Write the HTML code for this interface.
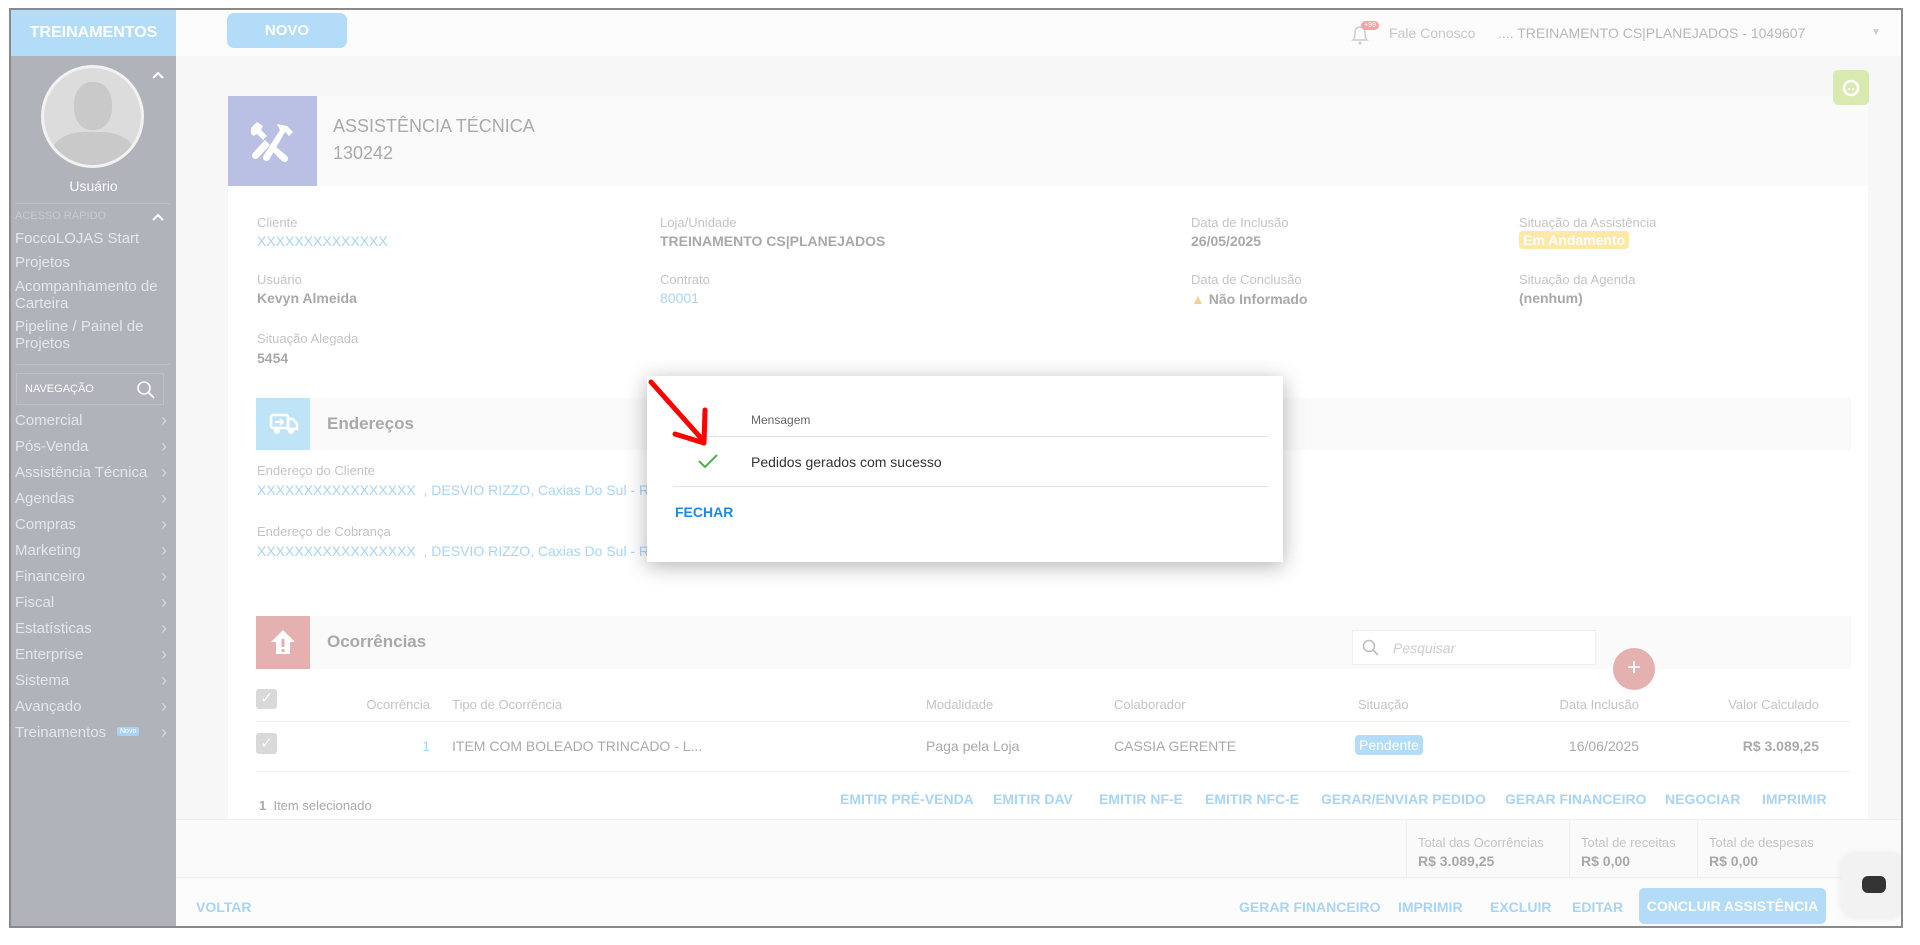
<!DOCTYPE html>
<html><head><meta charset="utf-8"><style>
*{margin:0;padding:0;box-sizing:border-box}
body{width:1920px;height:945px;background:#fff;font-family:"Liberation Sans",sans-serif;position:relative;overflow:hidden;color:#aaa}
.a{position:absolute;white-space:nowrap}
.frame{position:absolute;left:9px;top:8px;width:1894px;height:920px;border:2px solid #8a8a8a;background:#f7f7f7;overflow:hidden}
.lbl{font-size:13px;color:#c4c4c4}
.val{font-size:14px;color:#a9a9a9;font-weight:bold}
.lnk{font-size:14px;color:#a9d4f5}
.menu{font-size:15px;color:#e4e6ea}
.chev{position:absolute;left:150px;font-size:18px;color:#d6d8dc;line-height:16px}
.act{font-size:14px;font-weight:bold;color:#a9d4f5}
</style></head><body>
<div class="frame">
<!-- sidebar -->
<div class="a" style="left:0;top:0;width:165px;height:920px;background:#b0b3ba"></div>
<div class="a" style="left:0;top:0;width:165px;height:46px;background:#b3dcf9;color:#fff;font-weight:bold;font-size:16px;text-align:center;line-height:46px">TREINAMENTOS</div>
<div class="a" style="left:30px;top:55px;width:103px;height:103px;border-radius:50%;background:#dcdcdc;border:3px solid #f2f2f2;overflow:hidden">
 <div style="position:absolute;left:30px;top:14px;width:38px;height:48px;border-radius:45%;background:#c9c9c9"></div>
 <div style="position:absolute;left:8px;top:64px;width:82px;height:50px;border-radius:40% 40% 0 0;background:#c9c9c9"></div>
</div>
<svg class="a" style="left:140px;top:60px" width="14" height="10"><path d="M2 8 L7 3 L12 8" fill="none" stroke="#fff" stroke-width="2"/></svg>
<div class="a" style="left:0;width:165px;top:168px;text-align:center;color:#fff;font-size:14px">Usuário</div>
<div class="a" style="left:4px;top:193px;width:155px;height:1px;background:#bdc0c6"></div>
<div class="a" style="left:4px;top:200px;font-size:11px;color:#c8cbd0">ACESSO RÁPIDO</div>
<svg class="a" style="left:140px;top:202px" width="14" height="10"><path d="M2 8 L7 3 L12 8" fill="none" stroke="#fff" stroke-width="2"/></svg>
<div class="a menu" style="left:4px;top:220px">FoccoLOJAS Start</div>
<div class="a menu" style="left:4px;top:244px">Projetos</div>
<div class="a menu" style="left:4px;top:268px;line-height:17px">Acompanhamento de<br>Carteira</div>
<div class="a menu" style="left:4px;top:308px;line-height:17px">Pipeline / Painel de<br>Projetos</div>
<div class="a" style="left:4px;top:354px;width:155px;height:1px;background:#bdc0c6"></div>
<div class="a" style="left:5px;top:363px;width:148px;height:32px;border:1px solid #bdc0c6"></div>
<div class="a" style="left:14px;top:373px;font-size:11px;color:#fff">NAVEGAÇÃO</div>
<svg class="a" style="left:124px;top:369px" width="22" height="22"><circle cx="9" cy="9" r="6" fill="none" stroke="#fff" stroke-width="1.6"/><line x1="13" y1="13" x2="19" y2="19" stroke="#fff" stroke-width="1.8"/></svg>
<div class="a" style="left:0;top:402px;width:165px">
<div class="a menu" style="left:4px;top:0">Comercial</div><div class="chev" style="top:0">›</div>
<div class="a menu" style="left:4px;top:26px">Pós-Venda</div><div class="chev" style="top:26px">›</div>
<div class="a menu" style="left:4px;top:52px">Assistência Técnica</div><div class="chev" style="top:52px">›</div>
<div class="a menu" style="left:4px;top:78px">Agendas</div><div class="chev" style="top:78px">›</div>
<div class="a menu" style="left:4px;top:104px">Compras</div><div class="chev" style="top:104px">›</div>
<div class="a menu" style="left:4px;top:130px">Marketing</div><div class="chev" style="top:130px">›</div>
<div class="a menu" style="left:4px;top:156px">Financeiro</div><div class="chev" style="top:156px">›</div>
<div class="a menu" style="left:4px;top:182px">Fiscal</div><div class="chev" style="top:182px">›</div>
<div class="a menu" style="left:4px;top:208px">Estatísticas</div><div class="chev" style="top:208px">›</div>
<div class="a menu" style="left:4px;top:234px">Enterprise</div><div class="chev" style="top:234px">›</div>
<div class="a menu" style="left:4px;top:260px">Sistema</div><div class="chev" style="top:260px">›</div>
<div class="a menu" style="left:4px;top:286px">Avançado</div><div class="chev" style="top:286px">›</div>
<div class="a menu" style="left:4px;top:312px">Treinamentos</div><div class="a" style="left:106px;top:315px;background:#a9d4f5;color:#fff;font-size:7px;padding:1px 3px;border-radius:2px">Novo</div><div class="chev" style="top:312px">›</div>
</div>
<!-- top bar -->
<div class="a" style="left:165px;top:0;width:1729px;height:46px;background:#fcfcfc"></div>
<div class="a" style="left:216px;top:3px;width:120px;height:35px;background:#b3dcf9;border-radius:7px;color:#fff;font-weight:bold;font-size:15px;text-align:center;line-height:35px">NOVO</div>
<svg class="a" style="left:1338px;top:13px" width="22" height="24"><path d="M4 17 Q6 15 6 10 Q6 4 11 4 Q16 4 16 10 Q16 15 18 17 Z" fill="none" stroke="#ccc" stroke-width="1.5"/><circle cx="11" cy="20" r="1.5" fill="#ccc"/></svg>
<div class="a" style="left:1350px;top:11px;background:#f5a3a3;color:#fff;font-size:7px;padding:1px 3px;border-radius:6px">+99</div>
<div class="a" style="left:1378px;top:15px;font-size:14px;color:#c8c8c8">Fale Conosco</div>
<div class="a" style="left:1487px;top:15px;font-size:14px;color:#b8b8b8">.... TREINAMENTO CS|PLANEJADOS - 1049607</div>
<div class="a" style="left:1860px;top:17px;font-size:10px;color:#ccc">▼</div>
<!-- main panel -->
<div class="a" style="left:217px;top:86px;width:1640px;height:731px;background:#fff"></div>
<div class="a" style="left:217px;top:86px;width:1640px;height:90px;background:#fafafa"></div>
<!-- green -->
<div class="a" style="left:1822px;top:60px;width:36px;height:35px;background:#d8eab0;border-radius:5px"></div>
<svg class="a" style="left:1830px;top:68px" width="20" height="20"><circle cx="10" cy="10" r="7" fill="none" stroke="#fff" stroke-width="2.5"/><circle cx="8" cy="11" r="1" fill="#fff"/><circle cx="12" cy="11" r="1" fill="#fff"/></svg>
<div class="a" style="left:217px;top:86px;width:89px;height:90px;background:#bac0e4"></div>
<svg class="a" style="left:240px;top:108px" width="44" height="46" viewBox="0 0 44 46"><g fill="#fff"><path d="M6 4 l6 4 -2 4 6 6 -4 4 -6 -6 -4 2 -4 -6z"/><path d="M14 22 l5 5 -12 13 q-3 2 -5 0 q-2 -2 0 -5z"/><path d="M26 6 l10 2 6 6 -4 4 -4 -4 -16 28 q-3 2 -5 0 q-2 -2 0 -5 l16 -25z"/><path d="M24 28 l12 10 q2 3 0 5 q-2 2 -5 0 l-11 -11z"/></g></svg>
<div class="a" style="left:322px;top:106px;font-size:18px;color:#aaa">ASSISTÊNCIA TÉCNICA</div>
<div class="a" style="left:322px;top:133px;font-size:18px;color:#aaa">130242</div>
<!-- info fields -->
<div class="a lbl" style="left:246px;top:205px">Cliente</div>
<div class="a lnk" style="left:246px;top:223px">XXXXXXXXXXXXXX</div>
<div class="a lbl" style="left:246px;top:262px">Usuário</div>
<div class="a val" style="left:246px;top:280px">Kevyn Almeida</div>
<div class="a lbl" style="left:246px;top:321px">Situação Alegada</div>
<div class="a val" style="left:246px;top:340px">5454</div>
<div class="a lbl" style="left:649px;top:205px">Loja/Unidade</div>
<div class="a val" style="left:649px;top:223px">TREINAMENTO CS|PLANEJADOS</div>
<div class="a lbl" style="left:649px;top:262px">Contrato</div>
<div class="a lnk" style="left:649px;top:280px">80001</div>
<div class="a lbl" style="left:1180px;top:205px">Data de Inclusão</div>
<div class="a val" style="left:1180px;top:223px">26/05/2025</div>
<div class="a lbl" style="left:1180px;top:262px">Data de Conclusão</div>
<div class="a val" style="left:1180px;top:281px"><span style="color:#f6cf9a">▲</span> Não Informado</div>
<div class="a lbl" style="left:1508px;top:205px">Situação da Assistência</div>
<div class="a" style="left:1508px;top:221px;background:#fde8a8;color:#fff;font-weight:bold;font-size:14px;padding:1px 4px;border-radius:4px">Em Andamento</div>
<div class="a lbl" style="left:1508px;top:262px">Situação da Agenda</div>
<div class="a val" style="left:1508px;top:280px">(nenhum)</div>
<!-- Endereços -->
<div class="a" style="left:245px;top:388px;width:1595px;height:52px;background:#fafafa"></div>
<div class="a" style="left:245px;top:388px;width:54px;height:52px;background:#c0e4f7"></div>
<svg class="a" style="left:258px;top:402px" width="30" height="24"><rect x="2" y="3" width="17" height="13" rx="2" fill="none" stroke="#fff" stroke-width="2.5"/><path d="M19 7 h5 l4 5 v5 h-9z" fill="none" stroke="#fff" stroke-width="2.5"/><circle cx="8" cy="19" r="3" fill="#fff"/><circle cx="22" cy="19" r="3" fill="#fff"/><path d="M6 10 h8 M11 7 l3 3 -3 3" stroke="#fff" stroke-width="2" fill="none"/></svg>
<div class="a" style="left:316px;top:404px;font-size:17px;color:#a9a9a9;font-weight:bold">Endereços</div>
<div class="a lbl" style="left:246px;top:453px">Endereço do Cliente</div>
<div class="a lnk" style="left:246px;top:472px">XXXXXXXXXXXXXXXXX &nbsp;, DESVIO RIZZO, Caxias Do Sul - RS, 95</div>
<div class="a lbl" style="left:246px;top:514px">Endereço de Cobrança</div>
<div class="a lnk" style="left:246px;top:533px">XXXXXXXXXXXXXXXXX &nbsp;, DESVIO RIZZO, Caxias Do Sul - RS, 95</div>
<!-- Ocorrências -->
<div class="a" style="left:245px;top:606px;width:1595px;height:53px;background:#fafafa"></div>
<div class="a" style="left:245px;top:606px;width:54px;height:53px;background:#e4b0b0"></div>
<svg class="a" style="left:258px;top:618px" width="28" height="28"><path d="M14 2 L26 14 H21 V26 H7 V14 H2 Z" fill="#fff"/><rect x="12.5" y="11" width="3" height="8" fill="#e4b0b0"/><rect x="12.5" y="21" width="3" height="3" fill="#e4b0b0"/></svg>
<div class="a" style="left:316px;top:622px;font-size:17px;color:#a9a9a9;font-weight:bold">Ocorrências</div>
<div class="a" style="left:1341px;top:620px;width:244px;height:35px;background:#fff;border:1px solid #eee"></div>
<svg class="a" style="left:1350px;top:628px" width="20" height="20"><circle cx="8" cy="8" r="5.5" fill="none" stroke="#bbb" stroke-width="1.5"/><line x1="12" y1="12" x2="17" y2="17" stroke="#bbb" stroke-width="1.6"/></svg>
<div class="a" style="left:1382px;top:630px;font-size:14px;font-style:italic;color:#ccc">Pesquisar</div>
<div class="a" style="left:1602px;top:638px;width:42px;height:42px;border-radius:50%;background:#e4b0b0;color:#fff;font-size:24px;text-align:center;line-height:40px">+</div>
<!-- table -->
<div class="a" style="left:245px;top:679px;width:21px;height:20px;background:#d9d9d9;border-radius:3px;color:#fff;font-size:15px;text-align:center;line-height:20px">✓</div>
<div class="a lbl" style="left:345px;top:687px;width:74px;text-align:right">Ocorrência</div>
<div class="a lbl" style="left:441px;top:687px">Tipo de Ocorrência</div>
<div class="a lbl" style="left:915px;top:687px">Modalidade</div>
<div class="a lbl" style="left:1103px;top:687px">Colaborador</div>
<div class="a lbl" style="left:1347px;top:687px">Situação</div>
<div class="a lbl" style="left:1528px;top:687px;width:100px;text-align:right">Data Inclusão</div>
<div class="a lbl" style="left:1708px;top:687px;width:100px;text-align:right">Valor Calculado</div>
<div class="a" style="left:245px;top:711px;width:1595px;height:1px;background:#f0f0f0"></div>
<div class="a" style="left:245px;top:723px;width:21px;height:21px;background:#d9d9d9;border-radius:3px;color:#fff;font-size:15px;text-align:center;line-height:21px">✓</div>
<div class="a lnk" style="left:380px;top:728px;width:39px;text-align:right">1</div>
<div class="a" style="left:441px;top:728px;font-size:14px;color:#aaa">ITEM COM BOLEADO TRINCADO - L...</div>
<div class="a" style="left:915px;top:728px;font-size:14px;color:#aaa">Paga pela Loja</div>
<div class="a" style="left:1103px;top:728px;font-size:14px;color:#aaa">CASSIA GERENTE</div>
<div class="a" style="left:1344px;top:725px;background:#b3dcf9;color:#fff;font-size:14px;padding:2px 4px;border-radius:4px">Pendente</div>
<div class="a" style="left:1528px;top:728px;width:100px;text-align:right;font-size:14px;color:#aaa">16/06/2025</div>
<div class="a" style="left:1708px;top:728px;width:100px;text-align:right;font-size:14px;color:#aaa;font-weight:bold">R$ 3.089,25</div>
<div class="a" style="left:245px;top:761px;width:1595px;height:1px;background:#f0f0f0"></div>
<div class="a" style="left:248px;top:788px;font-size:13px;color:#aaa"><b>1</b> &nbsp;Item selecionado</div>
<div class="a act" style="left:829px;top:781px">EMITIR PRÉ-VENDA</div>
<div class="a act" style="left:982px;top:781px">EMITIR DAV</div>
<div class="a act" style="left:1088px;top:781px">EMITIR NF-E</div>
<div class="a act" style="left:1194px;top:781px">EMITIR NFC-E</div>
<div class="a act" style="left:1310px;top:781px">GERAR/ENVIAR PEDIDO</div>
<div class="a act" style="left:1494px;top:781px">GERAR FINANCEIRO</div>
<div class="a act" style="left:1654px;top:781px">NEGOCIAR</div>
<div class="a act" style="left:1751px;top:781px">IMPRIMIR</div>
<!-- totals -->
<div class="a" style="left:165px;top:809px;width:1729px;height:59px;background:#fafafa;border-top:1px solid #efefef;border-bottom:1px solid #efefef"></div>
<div class="a" style="left:1395px;top:810px;width:1px;height:57px;background:#eee"></div>
<div class="a" style="left:1558px;top:810px;width:1px;height:57px;background:#eee"></div>
<div class="a" style="left:1686px;top:810px;width:1px;height:57px;background:#eee"></div>
<div class="a lbl" style="left:1407px;top:825px">Total das Ocorrências</div>
<div class="a val" style="left:1407px;top:843px">R$ 3.089,25</div>
<div class="a lbl" style="left:1570px;top:825px">Total de receitas</div>
<div class="a val" style="left:1570px;top:843px">R$ 0,00</div>
<div class="a lbl" style="left:1698px;top:825px">Total de despesas</div>
<div class="a val" style="left:1698px;top:843px">R$ 0,00</div>
<!-- bottom -->
<div class="a" style="left:165px;top:869px;width:1729px;height:51px;background:#fcfcfc"></div>
<div class="a act" style="left:185px;top:889px">VOLTAR</div>
<div class="a act" style="left:1228px;top:889px">GERAR FINANCEIRO</div>
<div class="a act" style="left:1387px;top:889px">IMPRIMIR</div>
<div class="a act" style="left:1479px;top:889px">EXCLUIR</div>
<div class="a act" style="left:1561px;top:889px">EDITAR</div>
<div class="a" style="left:1628px;top:878px;width:187px;height:36px;background:#b3dcf9;border-radius:5px;color:#fff;font-weight:bold;font-size:14px;text-align:center;line-height:36px">CONCLUIR ASSISTÊNCIA</div>
<div class="a" style="left:1830px;top:842px;width:64px;height:64px;background:#f2f2f2;border-radius:14px;box-shadow:0 2px 8px rgba(0,0,0,.08)"></div>
<div class="a" style="left:1851px;top:866px;width:24px;height:17px;background:#333;border-radius:6px"></div>
<!-- modal -->
<div class="a" style="left:636px;top:366px;width:636px;height:186px;background:#fff;box-shadow:0 4px 20px rgba(0,0,0,.3)">
 <div class="a" style="left:104px;top:37px;font-size:12px;color:#666">Mensagem</div>
 <div class="a" style="left:26px;top:60px;width:595px;height:1px;background:#e2e2e2"></div>
 <svg class="a" style="left:50px;top:76px" width="22" height="18"><path d="M2 9 L8 15 L20 3" fill="none" stroke="#4caf50" stroke-width="2"/></svg>
 <div class="a" style="left:104px;top:78px;font-size:14px;color:#333">Pedidos gerados com sucesso</div>
 <div class="a" style="left:26px;top:110px;width:595px;height:1px;background:#e2e2e2"></div>
 <div class="a" style="left:28px;top:128px;font-size:14px;font-weight:bold;color:#1e88e5">FECHAR</div>
</div>
<svg class="a" style="left:636px;top:366px" width="80" height="80"><path d="M4 6 L54 62" stroke="#f00" stroke-width="5" stroke-linecap="round"/><path d="M58 34 L57 67 L28 58" fill="none" stroke="#f00" stroke-width="5" stroke-linecap="round" stroke-linejoin="round"/></svg>
</div>
</body></html>
